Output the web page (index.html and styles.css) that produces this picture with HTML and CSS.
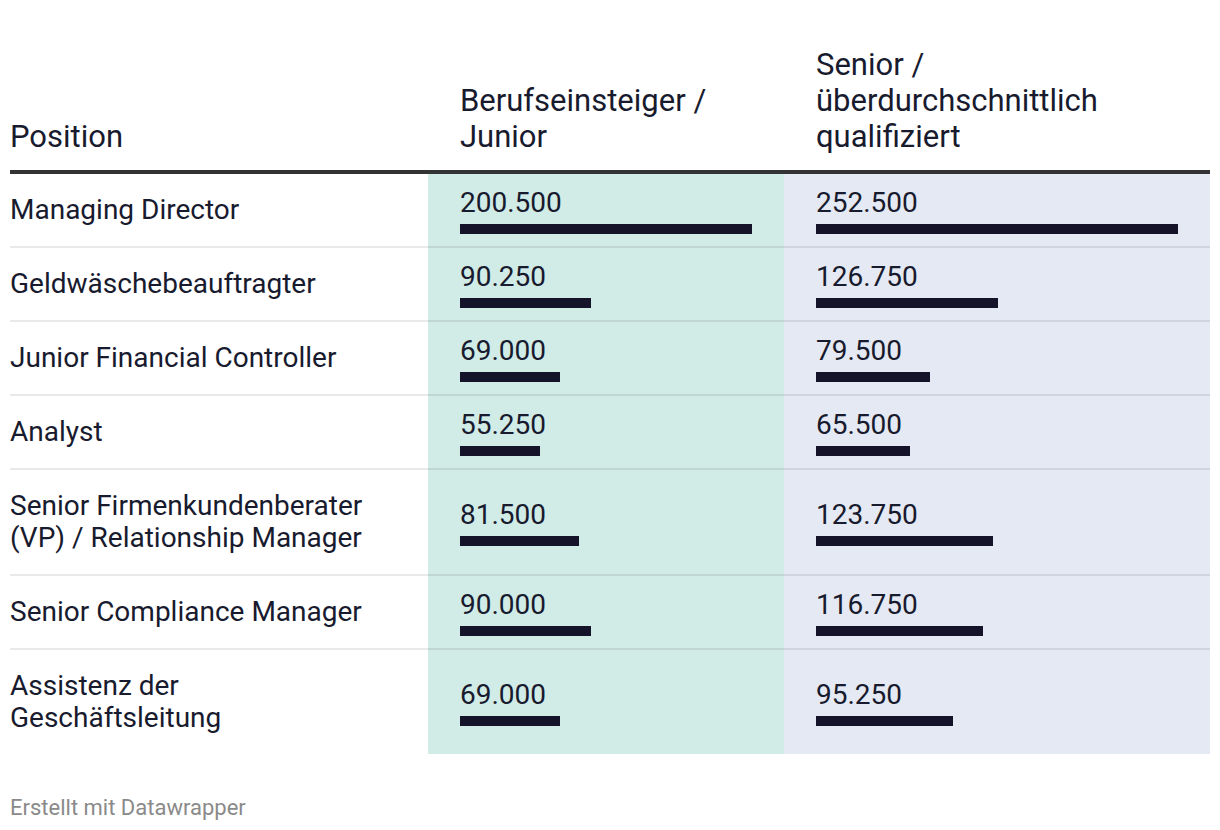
FILE: index.html
```html
<!DOCTYPE html>
<html lang="de">
<head>
<meta charset="utf-8">
<title>Gehälter</title>
<link rel="stylesheet" href="styles.css">
</head>
<body>
<div class="page">
  <div class="table">
    <div class="row head">
      <div class="cell c1">Position</div>
      <div class="cell c2">Berufseinsteiger / Junior</div>
      <div class="cell c3">Senior / überdurchschnittlich qualifiziert</div>
    </div>

    <div class="row">
      <div class="cell c1">Managing Director</div>
      <div class="cell c2 val"><span class="num">200.500</span><span class="bar" style="width:100%"></span></div>
      <div class="cell c3 val"><span class="num">252.500</span><span class="bar" style="width:100%"></span></div>
    </div>
    <div class="row">
      <div class="cell c1">Geldwäschebeauftragter</div>
      <div class="cell c2 val"><span class="num">90.250</span><span class="bar" style="width:45.01%"></span></div>
      <div class="cell c3 val"><span class="num">126.750</span><span class="bar" style="width:50.2%"></span></div>
    </div>
    <div class="row">
      <div class="cell c1">Junior Financial Controller</div>
      <div class="cell c2 val"><span class="num">69.000</span><span class="bar" style="width:34.41%"></span></div>
      <div class="cell c3 val"><span class="num">79.500</span><span class="bar" style="width:31.49%"></span></div>
    </div>
    <div class="row">
      <div class="cell c1">Analyst</div>
      <div class="cell c2 val"><span class="num">55.250</span><span class="bar" style="width:27.56%"></span></div>
      <div class="cell c3 val"><span class="num">65.500</span><span class="bar" style="width:25.94%"></span></div>
    </div>
    <div class="row">
      <div class="cell c1">Senior Firmenkundenberater (VP) / Relationship Manager</div>
      <div class="cell c2 val"><span class="num">81.500</span><span class="bar" style="width:40.65%"></span></div>
      <div class="cell c3 val"><span class="num">123.750</span><span class="bar" style="width:49.01%"></span></div>
    </div>
    <div class="row">
      <div class="cell c1">Senior Compliance Manager</div>
      <div class="cell c2 val"><span class="num">90.000</span><span class="bar" style="width:44.89%"></span></div>
      <div class="cell c3 val"><span class="num">116.750</span><span class="bar" style="width:46.24%"></span></div>
    </div>
    <div class="row last">
      <div class="cell c1">Assistenz der Geschäftsleitung</div>
      <div class="cell c2 val"><span class="num">69.000</span><span class="bar" style="width:34.41%"></span></div>
      <div class="cell c3 val"><span class="num">95.250</span><span class="bar" style="width:37.72%"></span></div>
    </div>
  </div>
  <div class="footer">Erstellt mit Datawrapper</div>
</div>
</body>
</html>
```

FILE: styles.css
```css
html, body {
  margin: 0;
  padding: 0;
  background: #ffffff;
}

.page {
  padding: 47px 10px 0 10px;
  font-family: Roboto, "Noto Sans", "Liberation Sans", sans-serif;
  color: #181a2e;
}

.table {
  width: 1200px;
}

.row {
  display: grid;
  grid-template-columns: 418px 356px 426px;
}

.cell {
  font-size: 28px;
  line-height: 32px;
  border-bottom: 2px solid rgba(0, 0, 0, 0.085);
}

.row.last .cell {
  border-bottom: none;
}

.c1 {
  padding: 20px 50px 20px 0;
}

.c2, .c3 {
  padding: 12px 32px;
}

.c2 {
  background: #d1ebe6;
}

.c3 {
  background: #e4e9f3;
}

.val {
  display: flex;
  flex-direction: column;
  justify-content: center;
}

.num {
  display: block;
}

.bar {
  display: block;
  height: 10px;
  margin-top: 5px;
  background: #15132a;
}

.row.head .cell {
  background: #ffffff;
  font-size: 31px;
  line-height: 36px;
  padding-top: 0;
  padding-bottom: 15px;
  border-bottom: 4px solid #333333;
  display: flex;
  align-items: flex-end;
}

.row.head .c1 {
  padding-right: 50px;
}

.footer {
  margin-top: 42px;
  font-size: 22px;
  line-height: 24px;
  color: #8a8a8a;
}
```
